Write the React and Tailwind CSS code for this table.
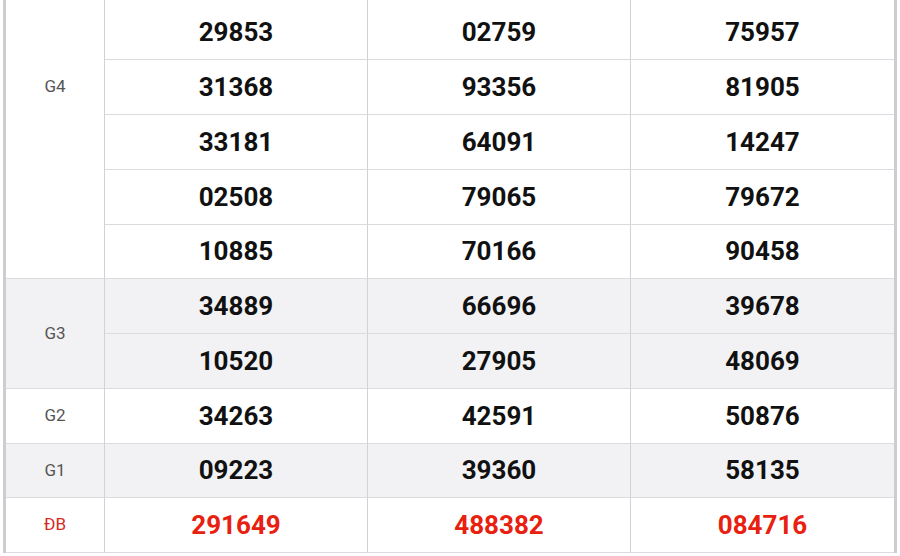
const GROUPS = [
    {
        label: 'G4',
        shaded: false,
        rows: [
            // two rows scrolled out above the top edge
            { h: 'h-[55px]', nums: [], hidden: true },
            { h: 'h-[55px]', nums: [], hidden: true },
            { h: 'h-[55px]', nums: ['29853', '02759', '75957'] },
            { h: 'h-[55px]', nums: ['31368', '93356', '81905'] },
            { h: 'h-[55px]', nums: ['33181', '64091', '14247'] },
            { h: 'h-[55px]', nums: ['02508', '79065', '79672'] },
            { h: 'h-[54px]', nums: ['10885', '70166', '90458'] },
        ],
    },
    {
        label: 'G3',
        shaded: true,
        rows: [
            { h: 'h-[55px]', nums: ['34889', '66696', '39678'] },
            { h: 'h-[55px]', nums: ['10520', '27905', '48069'] },
        ],
    },
    { label: 'G2', shaded: false, rows: [{ h: 'h-[55px]', nums: ['34263', '42591', '50876'] }] },
    { label: 'G1', shaded: true, rows: [{ h: 'h-[54px]', nums: ['09223', '39360', '58135'] }] },
    { label: 'ĐB', shaded: false, special: true, rows: [{ h: 'h-[55px]', nums: ['291649', '488382', '084716'] }] },
];

export default function App() {
    return (
        <div className="w-[900px] h-[556px] overflow-hidden bg-white font-['Roboto',sans-serif]">
            <div className="-mt-[105px] mx-[3px] border-x-[3px] border-[#cdcdd1]">
                {GROUPS.map((group) => (
                    <div key={group.label} className={`flex ${group.shaded ? 'bg-[#f2f2f4]' : 'bg-white'}`}>
                        <div
                            className={`w-[99px] shrink-0 flex items-center justify-center border-r border-b border-r-[#d2d2d6] border-b-[#dcdce0] text-[17px] ${group.special ? 'text-[#d42a1e]' : 'text-[#555]'}`}
                        >
                            {group.label}
                        </div>
                        <div className="flex-1">
                            {group.rows.map((row, i) =>
                                row.hidden ? (
                                    <div key={i} className={`grid grid-cols-[263px_263px_263px] ${row.h}`}>
                                        <div className="border-r border-r-[#d2d2d6]" />
                                        <div className="border-r border-r-[#d2d2d6]" />
                                        <div />
                                    </div>
                                ) : (
                                    <div key={i} className={`grid grid-cols-[263px_263px_263px] ${row.h}`}>
                                        {row.nums.map((n, j) => (
                                            <div
                                                key={j}
                                                className={`flex items-center justify-center border-b border-b-[#dcdce0] text-[26px] font-bold ${j < 2 ? 'border-r border-r-[#d2d2d6]' : ''} ${group.special ? 'text-[#e8200f]' : 'text-[#111]'}`}
                                            >
                                                {n}
                                            </div>
                                        ))}
                                    </div>
                                )
                            )}
                        </div>
                    </div>
                ))}
            </div>
        </div>
    );
}
